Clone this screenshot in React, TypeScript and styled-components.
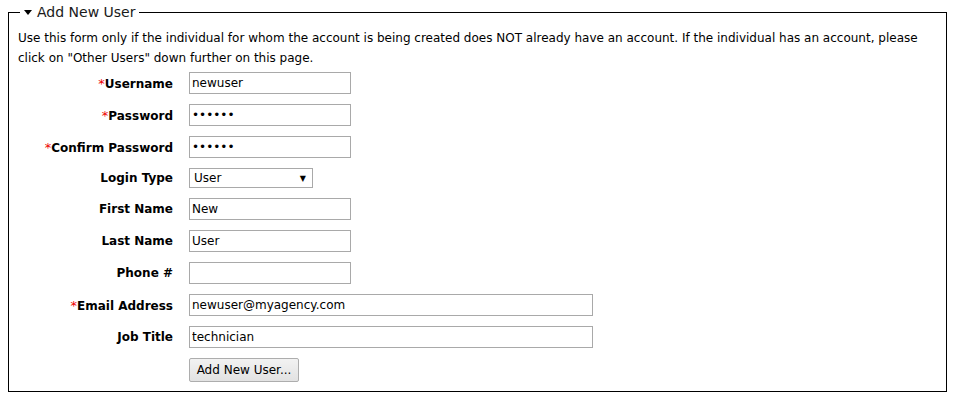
import styled, { createGlobalStyle } from 'styled-components'

const GlobalStyle = createGlobalStyle`
    body {
        margin: 0;
        background: #fff;
        font-family: "DejaVu Sans", Verdana, sans-serif;
        color: #000;
    }
`

type Field = {
    label: string
    value: string
    required?: boolean
    type?: 'text' | 'password' | 'select'
    wide?: boolean
}

const fields: Field[] = [
    { label: 'Username', value: 'newuser', required: true },
    { label: 'Password', value: 'secret', required: true, type: 'password' },
    { label: 'Confirm Password', value: 'secret', required: true, type: 'password' },
    { label: 'Login Type', value: 'User', type: 'select' },
    { label: 'First Name', value: 'New' },
    { label: 'Last Name', value: 'User' },
    { label: 'Phone #', value: '' },
    { label: 'Email Address', value: 'newuser@myagency.com', required: true, wide: true },
    { label: 'Job Title', value: 'technician', wide: true },
]

export default function App() {
    return (
        <Page>
            <GlobalStyle />
            <Box>
                <Legend>
                    <Caret viewBox="0 0 8 5" aria-hidden="true">
                        <path d="M0 0 H8 L4 5 Z" />
                    </Caret>
                    Add New User
                </Legend>
                <Intro>
                    Use this form only if the individual for whom the account is being
                    created does NOT already have an account. If the individual has an
                    account, please click on "Other Users" down further on this page.
                </Intro>
                <Form onSubmit={(e) => e.preventDefault()}>
                    {fields.map((f) => (
                        <Row key={f.label}>
                            <Label>
                                {f.required && <Star>*</Star>}
                                {f.label}
                            </Label>
                            {f.type === 'select' ? (
                                <SelectBox>
                                    <span>{f.value}</span>
                                    <Arrow>▼</Arrow>
                                </SelectBox>
                            ) : (
                                <Input
                                    type={f.type || 'text'}
                                    defaultValue={f.value}
                                    $wide={f.wide}
                                />
                            )}
                        </Row>
                    ))}
                    <Row>
                        <span />
                        <div>
                            <Button type="submit">Add New User...</Button>
                        </div>
                    </Row>
                </Form>
            </Box>
        </Page>
    )
}

const Page = styled.div`
    padding: 4px 12px 10px 8px;
`

const Box = styled.fieldset`
    margin: 0;
    padding: 0 9px 9px 9px;
    border: 1px solid #000;
    min-width: 0;
`

const Legend = styled.legend`
    display: flex;
    align-items: center;
    gap: 5px;
    margin-left: 2px;
    padding: 0 4px;
    font-size: 14px;
    line-height: 16px;
    color: #1a1a1a;
`

const Caret = styled.svg`
    width: 8px;
    height: 5px;
    fill: #000;
`

const Intro = styled.p`
    margin: 8px 0 4px 0;
    font-size: 12px;
    line-height: 20px;
`

const Form = styled.form`
    display: flex;
    flex-direction: column;
    gap: 10px;
`

const Row = styled.div`
    display: grid;
    grid-template-columns: 155px auto;
    column-gap: 16px;
    align-items: center;
`

const Label = styled.label`
    text-align: right;
    font-weight: bold;
    font-size: 12px;
`

const Star = styled.span`
    color: #e00;
    font-weight: normal;
    font-size: 13px;
`

const Input = styled.input<{ $wide?: boolean }>`
    box-sizing: border-box;
    width: ${(p) => (p.$wide ? '404px' : '162px')};
    height: 22px;
    margin: 0;
    padding: 0 2px;
    border: 1px solid #a9a9a9;
    font-family: "DejaVu Sans", Verdana, sans-serif;
    font-size: 12px;
    color: #000;
    outline: none;
`

const SelectBox = styled.div`
    box-sizing: border-box;
    width: 124px;
    height: 20px;
    display: flex;
    align-items: center;
    justify-content: space-between;
    padding: 0 6px 0 4px;
    border: 1px solid #a9a9a9;
    font-size: 12px;
`

const Arrow = styled.span`
    font-size: 8px;
`

const Button = styled.button`
    box-sizing: border-box;
    width: 110px;
    height: 24px;
    margin: 0;
    border: 1px solid #adadad;
    border-radius: 2px;
    background: linear-gradient(#f2f2f2, #e2e2e2);
    font-family: "DejaVu Sans", Verdana, sans-serif;
    font-size: 12px;
    color: #000;
`
